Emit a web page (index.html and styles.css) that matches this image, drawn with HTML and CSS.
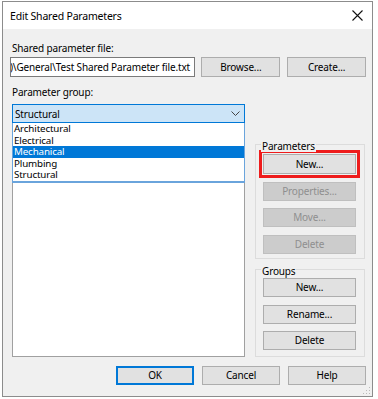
FILE: index.html
```html
<!DOCTYPE html>
<html lang="en">
<head>
    <meta charset="UTF-8">
    <title>Edit Shared Parameters</title>
    <link rel="stylesheet" href="styles.css">
</head>
<body>
    <div class="window">
        <div class="titlebar">
            <span class="title">Edit Shared Parameters</span>
            <svg class="close" width="11" height="11" viewBox="0 0 11 11">
                <path d="M0.5 0.5 L10.5 10.5 M10.5 0.5 L0.5 10.5" stroke="#111" stroke-width="1.1" fill="none"/>
            </svg>
        </div>

        <div class="content">
            <div class="label first">Shared parameter file:</div>
            <div class="file-row">
                <div class="textbox"><span>)\General\Test Shared Parameter file.txt</span></div>
                <button class="btn">Browse...</button>
                <button class="btn">Create...</button>
            </div>

            <div class="label second">Parameter group:</div>

            <div class="main">
                <div class="left-col">
                    <div class="combo">
                        <span>Structural</span>
                        <svg class="chevron" width="9" height="5" viewBox="0 0 9 5">
                            <path d="M0.5 0.5 L4.5 4.5 L8.5 0.5" stroke="#444" stroke-width="1" fill="none"/>
                        </svg>
                    </div>
                    <div class="listbox">
                        <!-- open dropdown of the combo lies over the list -->
                        <ul class="dropdown">
                            <li>Architectural</li>
                            <li>Electrical</li>
                            <li class="selected">Mechanical</li>
                            <li>Plumbing</li>
                            <li>Structural</li>
                        </ul>
                    </div>
                </div>

                <div class="right-col">
                    <div class="group params">
                        <span class="group-title">Parameters</span>
                        <div class="highlight">
                            <button class="btn wide">New...</button>
                        </div>
                        <button class="btn wide disabled">Properties...</button>
                        <button class="btn wide disabled">Move...</button>
                        <button class="btn wide disabled">Delete</button>
                    </div>
                    <div class="group groups">
                        <span class="group-title">Groups</span>
                        <button class="btn wide">New...</button>
                        <button class="btn wide">Rename...</button>
                        <button class="btn wide">Delete</button>
                    </div>
                </div>
            </div>

            <div class="footer">
                <button class="btn default">OK</button>
                <button class="btn">Cancel</button>
                <button class="btn">Help</button>
            </div>
        </div>

        <svg class="grip" width="8" height="8" viewBox="0 0 8 8">
            <rect x="6" y="0" width="1" height="1" fill="#bbb"/>
            <rect x="3" y="3" width="1" height="1" fill="#bbb"/>
            <rect x="6" y="3" width="1" height="1" fill="#bbb"/>
            <rect x="0" y="6" width="1" height="1" fill="#bbb"/>
            <rect x="3" y="6" width="1" height="1" fill="#bbb"/>
            <rect x="6" y="6" width="1" height="1" fill="#bbb"/>
        </svg>
    </div>
</body>
</html>
```

FILE: styles.css
```css
body {
    margin: 0;
    background: #ffffff;
    font-family: "Noto Sans", "Open Sans", sans-serif;
    font-size: 10px;
    letter-spacing: -0.15px;
    color: #000000;
}

.window {
    position: relative;
    box-sizing: border-box;
    width: 371px;
    height: 396px;
    margin: 1px 0 0 2px;
    border: 1px solid #8c8c8c;
    background: #f0f0f0;
}

.titlebar {
    height: 27px;
    background: #ffffff;
    display: flex;
    align-items: center;
    justify-content: space-between;
    padding: 0 9px 0 7px;
}

.title {
    font-size: 10.5px;
    letter-spacing: -0.2px;
}

.close {
    display: block;
    margin-top: -1px;
}

.content {
    padding: 0 6px 0 7px;
}

.label {
    height: 14px;
    line-height: 14px;
    padding-left: 2px;
}

.label.first {
    padding-top: 12px;
}

.label.second {
    margin-top: 8px;
}

.file-row {
    display: flex;
    margin-top: 2px;
    height: 20px;
}

.textbox {
    box-sizing: border-box;
    width: 186px;
    height: 20px;
    background: #ffffff;
    border: 1px solid #7a7a7a;
    overflow: hidden;
    white-space: nowrap;
    line-height: 18px;
    padding-left: 1px;
}

.textbox span {
    margin-left: -2px;
}

.btn {
    box-sizing: border-box;
    width: 79px;
    height: 20px;
    padding: 0;
    background: #e1e1e1;
    border: 1px solid #adadad;
    font-family: inherit;
    font-size: 10px;
    letter-spacing: -0.15px;
    color: #000000;
    line-height: 17px;
}

.file-row .btn {
    margin-left: 6px;
}

.file-row .btn + .btn {
    margin-left: 7px;
}

.main {
    display: flex;
    margin-top: 5px;
    height: 253px;
}

.left-col {
    display: flex;
    flex-direction: column;
    width: 233px;
    margin-left: 2px;
}

.combo {
    box-sizing: border-box;
    height: 19px;
    background: #cce4f7;
    border: 1px solid #0078d7;
    display: flex;
    align-items: center;
    justify-content: space-between;
    padding: 0 4px 0 2px;
}

.chevron {
    display: block;
}

.listbox {
    position: relative;
    flex: 1;
    background: #ffffff;
    border: 1px solid #a0a0a0;
    border-top: none;
}

.dropdown {
    position: absolute;
    top: 0;
    left: -1px;
    right: -1px;
    margin: 0;
    padding: 0;
    list-style: none;
    background: #ffffff;
    border: 1px solid #6aa4dc;
    border-top: none;
    border-bottom: 2px solid #6aa4dc;
}

.dropdown li {
    height: 11.6px;
    line-height: 11.6px;
    padding-left: 1px;
    font-size: 9.8px;
}

.dropdown li.selected {
    background: #0078d7;
    color: #ffffff;
}

.right-col {
    width: 110px;
    margin-left: 10px;
}

.group {
    position: relative;
    box-sizing: border-box;
    border: 1px solid #dcdcdc;
}

.group-title {
    position: absolute;
    top: -5px;
    left: 5px;
    padding: 0 1px;
    background: #f0f0f0;
    line-height: 12px;
}

.params {
    margin-top: 40px;
    height: 115px;
}

.groups {
    margin-top: 10px;
    height: 88px;
    padding-top: 8px;
}

.highlight {
    width: 101px;
    margin: 5px 0 0 3px;
    box-sizing: border-box;
    border: 3px solid #ee1c1c;
    padding: 1px;
}

.btn.wide {
    display: block;
    width: 93px;
    height: 19px;
    margin-left: 7px;
}

.highlight .btn.wide {
    height: 20px;
    margin-left: 0;
}

.params .highlight + .btn {
    margin-top: 3.5px;
}

.params .btn.disabled + .btn,
.groups .btn + .btn {
    margin-top: 7.5px;
}

.btn.disabled {
    background: #cccccc;
    border-color: #bfbfbf;
    color: #8f8f8f;
}

.footer {
    display: flex;
    justify-content: flex-end;
    gap: 8px;
    margin-top: 9px;
}

.footer .btn {
    width: 78px;
    height: 19px;
}

.btn.default {
    border: 2px solid #0078d7;
    line-height: 15px;
}

.grip {
    position: absolute;
    right: 1px;
    bottom: 1px;
}
```
